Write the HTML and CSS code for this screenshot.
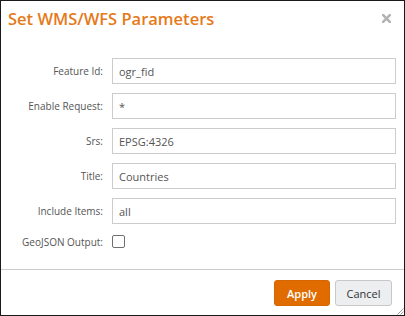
FILE: index.html
```html
<!DOCTYPE html>
<html>
<head>
<meta charset="utf-8">
<link rel="stylesheet" href="styles.css">
</head>
<body>
<div class="dialog">
  <div class="header">
    <h1 class="title">Set WMS/WFS Parameters</h1>
    <button class="close" aria-label="Close">
      <svg width="9" height="9" viewBox="0 0 9 9"><path d="M1.2 1.2 L7.8 7.8 M7.8 1.2 L1.2 7.8" stroke="#b3b3b3" stroke-width="2.6" stroke-linecap="square"/></svg>
    </button>
  </div>
  <div class="body">
    <form class="form">
      <label class="label">Feature Id:</label>
      <input class="input" type="text" value="ogr_fid">
      <label class="label">Enable Request:</label>
      <input class="input" type="text" value="*">
      <label class="label">Srs:</label>
      <input class="input" type="text" value="EPSG:4326">
      <label class="label">Title:</label>
      <input class="input" type="text" value="Countries">
      <label class="label">Include Items:</label>
      <input class="input" type="text" value="all">
      <label class="label">GeoJSON Output:</label>
      <div class="check-cell"><span class="checkbox"></span></div>
    </form>
  </div>
  <div class="footer">
    <button class="btn btn-primary">Apply</button>
    <button class="btn btn-default">Cancel</button>
  </div>
  <svg class="grip" width="7" height="7" viewBox="0 0 7 7"><path d="M6.5 0.5 L0.5 6.5 M6.5 3.5 L3.5 6.5" stroke="#9a9a9a" stroke-width="1"/></svg>
</div>
</body>
</html>
```
FILE: styles.css
```css
* { box-sizing: border-box; }
html, body { margin: 0; padding: 0; background: #fff; }
body { font-family: "Open Sans", "DejaVu Sans", sans-serif; }

.dialog {
  position: relative;
  width: 405px;
  height: 316px;
  border: 1px solid #1a1a1a;
  background: #fff;
  display: flex;
  flex-direction: column;
}

.header {
  display: flex;
  align-items: flex-start;
  justify-content: space-between;
  padding: 6px 13px 0 7px;
  height: 41px;
}
.title {
  margin: 0;
  font-size: 16.5px;
  line-height: 24px;
  font-weight: 600;
  color: #e57a1a;
}
.close {
  border: 0;
  background: none;
  padding: 0;
  margin-top: 7px;
  width: 9px;
  height: 9px;
  display: flex;
}

.body {
  padding: 16px 8px 0 0;
  flex: 1;
}
.form {
  display: grid;
  grid-template-columns: 102px 1fr;
  column-gap: 9px;
  row-gap: 9px;
  margin: 0;
}
.label {
  text-align: right;
  font-size: 10px;
  color: #555;
  align-self: center;
}
.input {
  height: 26px;
  border: 1px solid #cccccc;
  border-radius: 0;
  padding: 0 6px;
  font-family: "Open Sans", sans-serif;
  font-size: 11px;
  color: #555;
  width: 100%;
  outline: none;
}
.check-cell {
  height: 17px;
  display: flex;
  align-items: center;
}
.checkbox {
  display: block;
  width: 13px;
  height: 13px;
  border: 1px solid #6f6f6f;
  border-radius: 2px;
  background: #fff;
}

.footer {
  border-top: 1px solid #cccccc;
  height: 46px;
  display: flex;
  justify-content: flex-end;
  align-items: flex-start;
  gap: 5px;
  padding: 10px 12px 0 0;
}
.btn {
  height: 26px;
  border-radius: 3px;
  font-family: "Open Sans", sans-serif;
  font-size: 11px;
  padding: 0;
  cursor: pointer;
}
.btn-primary {
  width: 56px;
  background: #e06c00;
  border: 1px solid #d56600;
  color: #fff;
  font-weight: 600;
}
.btn-default {
  width: 57px;
  background: #eceef0;
  border: 1px solid #c8c8c8;
  color: #333;
}
.grip {
  position: absolute;
  right: 0;
  bottom: 0;
}
```
